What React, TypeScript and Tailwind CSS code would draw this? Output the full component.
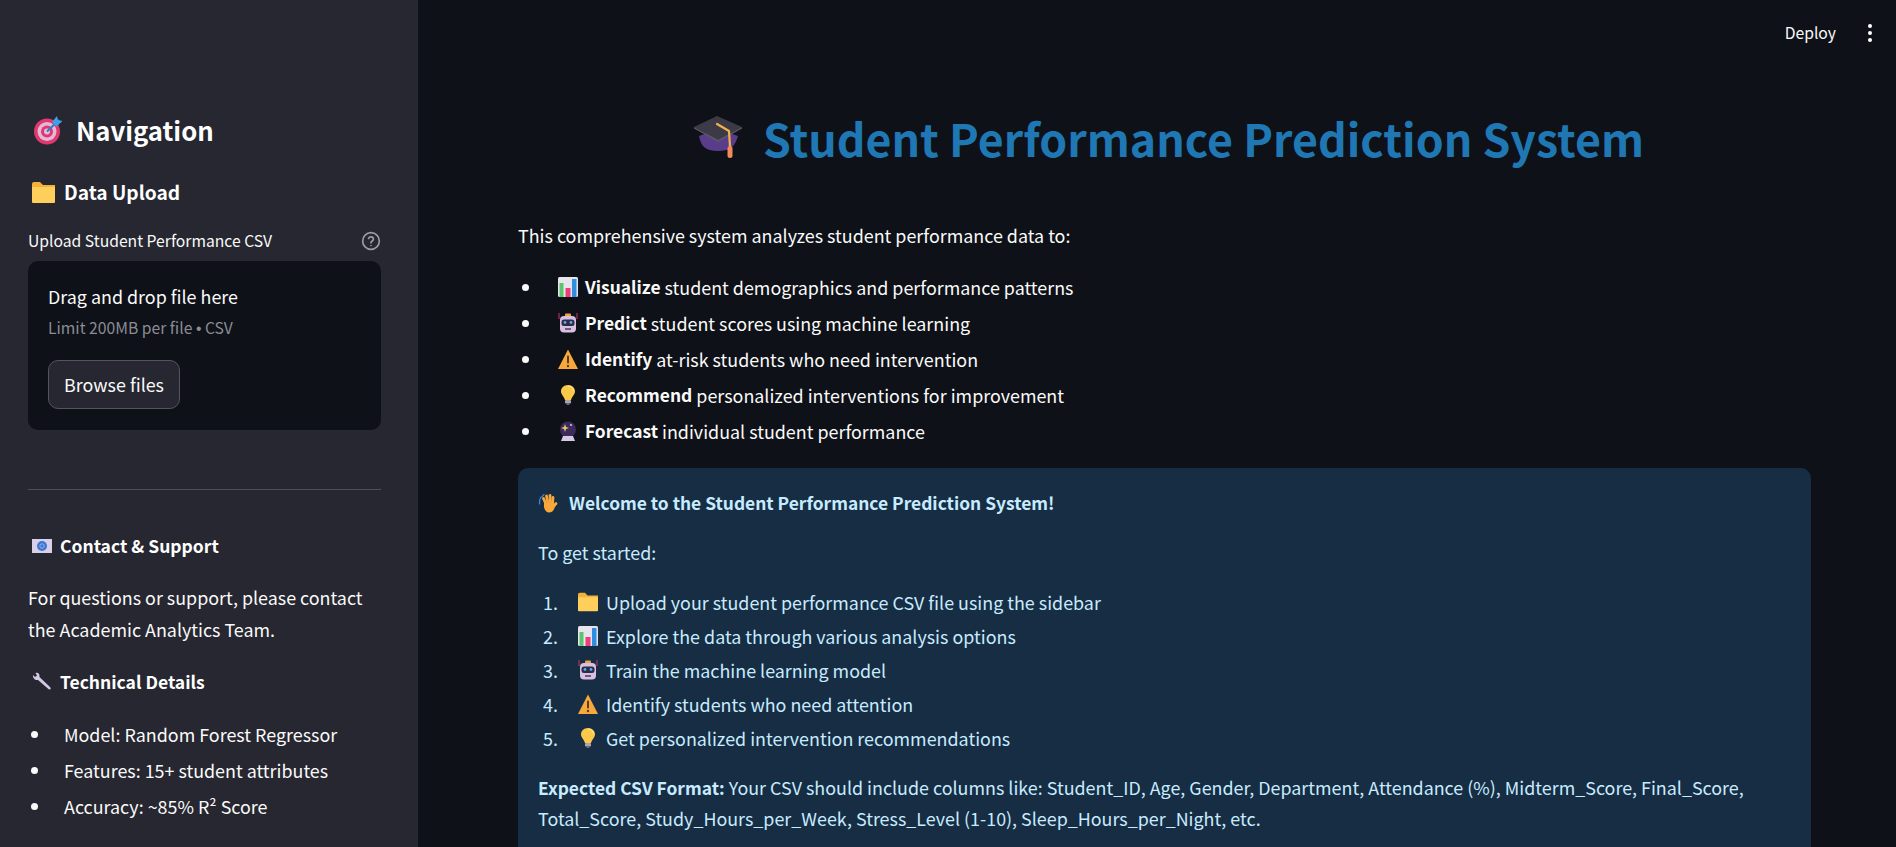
import React from 'react';

type IconProps = { size?: number; className?: string };

const Cap = ({ size = 50, className = '' }: IconProps) => (
  <svg width={size} height={size} viewBox="0 0 50 50" className={className}>
    <path d="M6 23 C8 33 12 38 25 38 C38 38 42 33 45 23 L25 16 Z" fill="#5a3d8a" />
    <path d="M1 14 L24 3 L49 14 L25 27 Z" fill="#3d3a48" />
    <path d="M1 14 L25 27 L49 14 L49 15.500 L25 29 L1 15.500 Z" fill="#5b5866" />
    <path d="M24 11 L36 18 L37 34" fill="none" stroke="#f2b24a" strokeWidth="2.200" strokeLinecap="round" strokeLinejoin="round" />
    <rect x="34.500" y="33" width="5" height="12" rx="2.500" fill="#f48a5a" />
  </svg>
);

const Target = ({ size = 30, className = '' }: IconProps) => (
  <svg width={size} height={size} viewBox="0 0 30 30" className={className}>
    <circle cx="14" cy="16.500" r="13" fill="#e0386f" />
    <circle cx="14" cy="16.500" r="9.500" fill="#e2b9d6" />
    <circle cx="14" cy="16.500" r="6" fill="#e0386f" />
    <circle cx="14" cy="16.500" r="3" fill="#d8c4dc" />
    <path d="M14 16.500 L26 5" stroke="#2f7fc9" strokeWidth="2" />
    <path d="M19 7 L24 1 L25 5 L29.500 6 L23.500 11.500 Z" fill="#3ea0e8" />
  </svg>
);

const Folder = ({ size = 23, className = '' }: IconProps) => (
  <svg width={size} height={size} viewBox="0 0 23 23" className={className}>
    <path d="M0 3 Q0 1 2 1 H8 L11 4 H23 V21 H0 Z" fill="#f2b33a" />
    <path d="M0 6 H23 V21 Q23 22 22 22 H1 Q0 22 0 21 Z" fill="#ffcf5c" />
  </svg>
);

const Chart = ({ size = 20, className = '' }: IconProps) => (
  <svg width={size} height={size} viewBox="0 0 20 20" className={className}>
    <rect x="0" y="0" width="20" height="20" rx="1.500" fill="#e8e4ee" />
    <rect x="1.500" y="6" width="4" height="14" fill="#58c76b" />
    <rect x="7.500" y="11" width="5" height="9" fill="#ec3f79" />
    <rect x="14" y="2" width="4.500" height="18" fill="#2f8ee0" />
  </svg>
);

const Robot = ({ size = 20, className = '' }: IconProps) => (
  <svg width={size} height={size} viewBox="0 0 20 20" className={className}>
    <path d="M1 0 V6 M19 0 V6" stroke="#d8316a" strokeWidth="1" />
    <rect x="7" y="0.500" width="6" height="3" rx="1" fill="#f0a63c" />
    <rect x="2" y="3" width="16" height="16.500" rx="4" fill="#d9bfe0" />
    <rect x="3.500" y="6.500" width="13" height="6.500" rx="2.500" fill="#2c2d45" />
    <circle cx="7" cy="9.500" r="1.400" fill="#58a8ee" />
    <circle cx="13" cy="9.500" r="1.400" fill="#58a8ee" />
    <rect x="7" y="15" width="6" height="2" fill="#6c5a7c" />
  </svg>
);

const Warning = ({ size = 20, className = '' }: IconProps) => (
  <svg width={size} height={size} viewBox="0 0 20 20" className={className}>
    <path d="M10 0.500 L20 20 H0 Z" fill="#f8a93c" strokeLinejoin="round" />
    <rect x="9" y="6.500" width="2" height="8" rx="1" fill="#5a3a20" />
    <circle cx="10" cy="17" r="1.200" fill="#5a3a20" />
  </svg>
);

const Bulb = ({ size = 20, className = '' }: IconProps) => (
  <svg width={size} height={size} viewBox="0 0 20 20" className={className}>
    <path d="M10 0 C14.500 0 17 3 17 6.500 C17 9.500 14 11.500 13 15 H7 C6 11.500 3 9.500 3 6.500 C3 3 5.500 0 10 0 Z" fill="#fbc84a" />
    <path d="M10 1 C13 1 15.500 3 15.500 6" fill="none" stroke="#ffe9a0" strokeWidth="1" />
    <rect x="7" y="15" width="6" height="3.500" rx="1" fill="#a9a4b4" />
    <rect x="8.500" y="18.500" width="3" height="1.500" rx="0.700" fill="#6f6a7c" />
  </svg>
);

const Ball = ({ size = 20, className = '' }: IconProps) => (
  <svg width={size} height={size} viewBox="0 0 20 20" className={className}>
    <circle cx="10" cy="8.500" r="8" fill="#3d2b5c" />
    <path d="M7 3 L8 6 L11 7 L8 8 L7 11 L6 8 L3 7 L6 6 Z" fill="#e8c96a" />
    <circle cx="13" cy="4" r="0.900" fill="#e8d9f5" />
    <path d="M5 15 H15 L17 20 H3 Z" fill="#d6c9e4" />
  </svg>
);

const Wave = ({ size = 20, className = '' }: IconProps) => (
  <svg width={size} height={size} viewBox="0 0 20 20" className={className}>
    <path d="M3 4 C1.500 6 1 8 1.500 11 M6 1.500 C5 2.200 4.500 3 4 4" fill="none" stroke="#3f8be0" strokeWidth="1.200" strokeLinecap="round" />
    <g stroke="#f8a83a" strokeWidth="2.800" strokeLinecap="round">
      <path d="M8 11 L5.500 5.500" />
      <path d="M10 10 L8.500 3" />
      <path d="M12.500 10 L12 2.500" />
      <path d="M14.500 11 L15 4.500" />
      <path d="M15 14 L18 10.500" />
    </g>
    <path d="M6 10 L16 10 L16.500 15 C15.500 18 13.500 19.500 11 19.500 C8.500 19.500 6.500 17 6 14 Z" fill="#f8a83a" />
  </svg>
);

const Envelope = ({ size = 20, className = '' }: IconProps) => (
  <svg width={size} height={14} viewBox="0 0 20 14" className={className}>
    <rect width="20" height="14" fill="#d9cfe8" />
    <circle cx="10" cy="7" r="5" fill="#3f76d4" />
    <circle cx="10" cy="7" r="2.200" fill="none" stroke="#9ec0ee" strokeWidth="0.800" />
  </svg>
);

const Wrench = ({ size = 20, className = '' }: IconProps) => (
  <svg width={size} height={size} viewBox="0 0 20 20" className={className}>
    <path d="M1 3 L3 5 L5 3.500 L3.500 1 C6 0 8 2 7.500 5 L18 15 C19.500 16.500 18.500 18 17 17.500 L6 8 C3 8.500 0.500 6 1 3 Z" fill="#d4c8e4" />
  </svg>
);

const Heading = ({ icon, text, className }: { icon: React.ReactNode; text: string; className: string }) => (
  <div className={`flex items-center font-semibold text-white ${className}`}>
    {icon}
    <span>{text}</span>
  </div>
);

const sideDetails = ['Model: Random Forest Regressor', 'Features: 15+ student attributes', 'Accuracy: ~85% R² Score'];

const features = [
  { Icon: Chart, bold: 'Visualize', rest: ' student demographics and performance patterns' },
  { Icon: Robot, bold: 'Predict', rest: ' student scores using machine learning' },
  { Icon: Warning, bold: 'Identify', rest: ' at-risk students who need intervention' },
  { Icon: Bulb, bold: 'Recommend', rest: ' personalized interventions for improvement' },
  { Icon: Ball, bold: 'Forecast', rest: ' individual student performance' },
];

const steps = [
  { Icon: Folder, text: 'Upload your student performance CSV file using the sidebar' },
  { Icon: Chart, text: 'Explore the data through various analysis options' },
  { Icon: Robot, text: 'Train the machine learning model' },
  { Icon: Warning, text: 'Identify students who need attention' },
  { Icon: Bulb, text: 'Get personalized intervention recommendations' },
];

function Sidebar() {
  return (
    <aside className="w-[418px] shrink-0 h-full overflow-hidden bg-[#262730] pl-7 pr-[37px] pt-[110px] text-[#fafafa]">
      <Heading icon={<Target className="mr-[13px] ml-[5px]" />} text="Navigation" className="text-[25.700px] h-10" />
      <Heading icon={<Folder className="mr-[9px] ml-1" />} text="Data Upload" className="text-[19.200px] h-8 mt-[26px]" />

      <div className="flex items-center justify-between mt-[21px] h-6 text-[15.700px]">
        <span>Upload Student Performance CSV</span>
        <svg width="20" height="20" viewBox="0 0 24 24" fill="none" stroke="#9a9ba3" strokeWidth="2" strokeLinecap="round">
          <circle cx="12" cy="12" r="10" />
          <path d="M9.100 9a3 3 0 0 1 5.800 1c0 2-3 2.500-3 4" />
          <path d="M12 17.500h.01" />
        </svg>
      </div>

      <div className="mt-2 h-[169px] rounded-[10px] bg-[#0e1117] px-5 pt-[23px]">
        <div className="text-[17.900px] leading-6">Drag and drop file here</div>
        <div className="mt-2 text-[15.700px] leading-6 text-[#8a8c96]">
          Limit 200MB per file <span className="[font-family:'Liberation_Sans',sans-serif]">•</span> CSV
        </div>
        <button className="mt-[19px] h-[49px] w-[132px] rounded-[10px] border border-[#53545c] bg-[#262730] text-[17.900px] text-[#fafafa]">
          Browse files
        </button>
      </div>

      <div className="mt-[59px] h-px bg-[#4d4e57]" />

      <Heading icon={<Envelope className="mr-2 ml-1" />} text="Contact & Support" className="text-[17.500px] h-8 mt-[40px]" />
      <p className="mt-[19px] text-[17.900px] leading-8">For questions or support, please contact the Academic Analytics Team.</p>
      <Heading icon={<Wrench className="mr-2 ml-1" />} text="Technical Details" className="text-[17.500px] h-8 mt-[21px]" />
      <ul className="mt-[18px]">
        {sideDetails.map((item) => (
          <li key={item} className="flex items-center h-9 text-[17.900px]">
            <span className="ml-[3px] mr-[26px] size-[7px] rounded-full bg-[#fafafa]" />
            {item}
          </li>
        ))}
      </ul>
    </aside>
  );
}

export default function App() {
  return (
    <div className="flex h-screen w-full overflow-hidden bg-[#0e1117] [font-family:'Noto_Sans_CJK_SC',sans-serif]">
      <Sidebar />
      <main className="flex-1 min-w-0 flex flex-col text-[#fafafa]">
        <header className="flex h-[66px] shrink-0 items-center justify-end">
          <span className="text-[15.700px] mr-8">Deploy</span>
          <div className="mr-6 flex flex-col gap-[3px]">
            <span className="size-1 rounded-full bg-white" />
            <span className="size-1 rounded-full bg-white" />
            <span className="size-1 rounded-full bg-white" />
          </div>
        </header>

        <div className="pl-[100px] pr-[85px]">
          <h1 className="mt-[42px] pl-2 flex items-center justify-center h-[60px] text-[44.700px] font-bold text-[#1f77b4]">
            <Cap className="mr-5" />
            Student Performance Prediction System
          </h1>

          <p className="mt-[51px] text-[17.900px] leading-8">This comprehensive system analyzes student performance data to:</p>

          <ul className="mt-[18px]">
            {features.map(({ Icon, bold, rest }) => (
              <li key={bold} className="flex items-center h-9 text-[17.900px] whitespace-pre">
                <span className="ml-1 mr-[29px] size-[7px] rounded-full bg-[#fafafa]" />
                <Icon className="mr-[7px]" />
                <b className="font-semibold text-[17.400px]">{bold}</b>
                {rest}
              </li>
            ))}
          </ul>

          <section className="mt-[19px] h-[500px] rounded-[10px] bg-[#172d43] px-5 pt-[20px] text-[17.900px] text-[#c7ebff]">
            <div className="flex items-center h-[30px] font-semibold text-[17.400px]">
              <Wave className="mr-[11px]" />
              Welcome to the Student Performance Prediction System!
            </div>
            <p className="mt-[18px] leading-8">To get started:</p>
            <ol className="mt-[17px]">
              {steps.map(({ Icon, text }, i) => (
                <li key={text} className="flex items-center h-[34px]">
                  <span className="ml-[5px] w-[35px]">{i + 1}.</span>
                  <Icon size={20} className="mr-2" />
                  {text}
                </li>
              ))}
            </ol>
            <p className="mt-[17px] leading-[31px]">
              <b className="font-semibold text-[17.400px]">Expected CSV Format:</b> Your CSV should include columns like: Student_ID, Age, Gender, Department, Attendance (%), Midterm_Score, Final_Score, Total_Score, Study_Hours_per_Week, Stress_Level (1-10), Sleep_Hours_per_Night, etc.
            </p>
          </section>
        </div>
      </main>
    </div>
  );
}
